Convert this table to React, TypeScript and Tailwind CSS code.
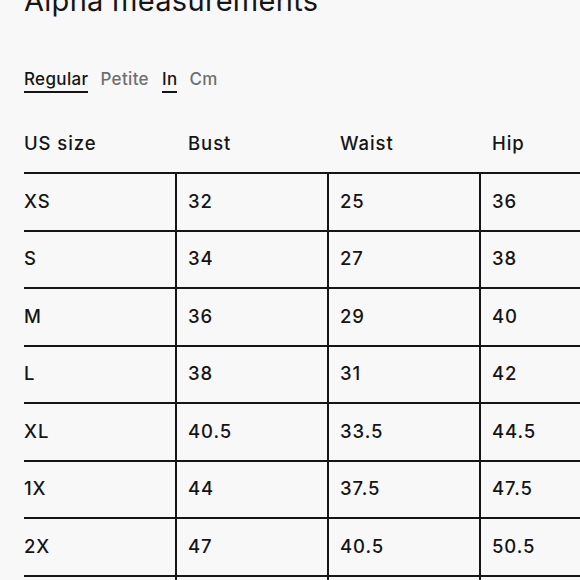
import React from "react";

const rows: [string, string, string, string][] = [
  ["XS", "32", "25", "36"],
  ["S", "34", "27", "38"],
  ["M", "36", "29", "40"],
  ["L", "38", "31", "42"],
  ["XL", "40.5", "33.5", "44.5"],
  ["1X", "44", "37.5", "47.5"],
  ["2X", "47", "40.5", "50.5"],
  ["", "", "", ""],
];

export default function App() {
  return (
    <div
      className="h-[580px] w-[580px] overflow-hidden bg-[#f8f8f8] text-[#151515] pl-6"
      style={{ fontFamily: "Inter, 'Noto Sans', sans-serif" }}
    >
      <h1 className="mt-[-19px] text-[29px] leading-[40px] tracking-[0.01em] font-normal whitespace-nowrap">
        Alpha measurements
      </h1>
      <div className="mt-[47px] flex items-start text-[17px] leading-[22px] tracking-[0.02em] font-medium">
        <span className="border-b-2 border-[#151515] pb-[1px]">Regular</span>
        <span className="ml-3 text-[#6f6f6f]">Petite</span>
        <span className="ml-[13px] border-b-2 border-[#151515] pb-[1px]">In</span>
        <span className="ml-3 text-[#6f6f6f]">Cm</span>
      </div>
      <div className="mt-[21px] w-[640px] text-[18.5px] tracking-[0.05em] font-medium">
        <div className="flex h-[58px] items-center pt-[2px]">
          <div className="w-[151px]">US size</div>
          <div className="w-[152px] pl-[13px]">Bust</div>
          <div className="w-[152px] pl-[13px]">Waist</div>
          <div className="w-[152px] pl-[13px]">Hip</div>
        </div>
        {rows.map((r, i) => (
          <div key={i} className="flex h-[57.5px] border-t-2 border-[#151515]">
            <div className="flex w-[151px] items-center">{r[0]}</div>
            <div className="flex w-[152px] items-center border-l-2 border-[#151515] pl-[11px]">{r[1]}</div>
            <div className="flex w-[152px] items-center border-l-2 border-[#151515] pl-[11px]">{r[2]}</div>
            <div className="flex w-[152px] items-center border-l-2 border-[#151515] pl-[11px]">{r[3]}</div>
          </div>
        ))}
      </div>
    </div>
  );
}
